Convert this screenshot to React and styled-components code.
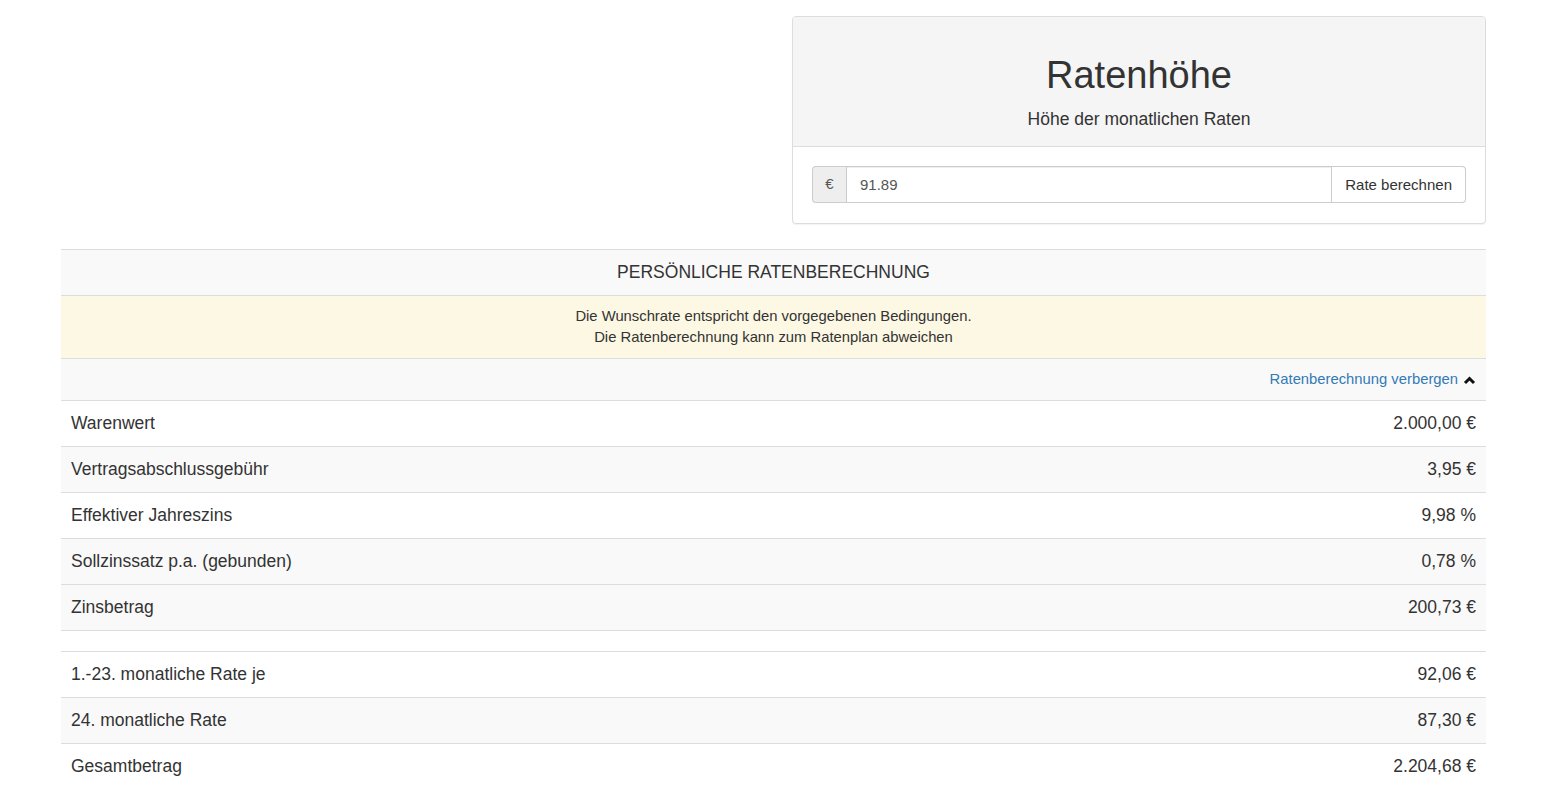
import React from "react";
import styled, { createGlobalStyle } from "styled-components";

const GlobalStyle = createGlobalStyle`
  body {
    margin: 0;
    background: #fff;
    color: #333;
    font-family: "Liberation Sans", Arial, sans-serif;
  }
`;

const Page = styled.div`
  width: 1425px;
  padding: 16px 0 20px 61px;
`;

const TopRow = styled.div`
  display: flex;
  justify-content: flex-end;
  margin-bottom: 25px;
`;

const Panel = styled.div`
  width: 692px;
  border: 1px solid #ddd;
  border-radius: 4px;
  background: #fff;
  box-shadow: 0 1px 1px rgba(0, 0, 0, 0.05);
`;

const PanelHeading = styled.div`
  background: #f5f5f5;
  border-bottom: 1px solid #ddd;
  border-radius: 3px 3px 0 0;
  padding: 37px 15px 14px;
  text-align: center;
`;

const Title = styled.h1`
  margin: 0 0 11px;
  font-size: 38px;
  font-weight: 400;
  line-height: 42px;
`;

const Subtitle = styled.div`
  font-size: 17.5px;
  line-height: 25px;
`;

const PanelBody = styled.div`
  padding: 19px 19px 20px;
`;

const InputGroup = styled.div`
  display: flex;
  height: 37px;
`;

const Addon = styled.span`
  width: 34px;
  display: flex;
  align-items: center;
  justify-content: center;
  background: #eee;
  border: 1px solid #ccc;
  border-right: 0;
  border-radius: 4px 0 0 4px;
  color: #555;
  font-size: 15px;
  padding-bottom: 2px;
  box-sizing: border-box;
`;

const Input = styled.input`
  flex: 1;
  min-width: 0;
  border: 1px solid #ccc;
  box-shadow: inset 0 1px 1px rgba(0, 0, 0, 0.075);
  padding: 0 13px;
  font-family: inherit;
  font-size: 15px;
  color: #555;
  outline: none;
`;

const Button = styled.button`
  background: #fff;
  border: 1px solid #ccc;
  border-left: 0;
  border-radius: 0 4px 4px 0;
  padding: 0 13px;
  font-family: inherit;
  font-size: 15px;
  color: #333;
  cursor: pointer;
`;

const Table = styled.div`
  border-top: 1px solid #ddd;
`;

const Cell = styled.div`
  border-bottom: 1px solid #ddd;
  background: ${(p) => (p.$shade ? "#f9f9f9" : "#fff")};
  padding: 10px;
  font-size: ${(p) => p.$size || "17.5px"};
  line-height: ${(p) => p.$lh || "25px"};
  text-align: ${(p) => p.$align || "left"};
`;

const Heading = styled(Cell)`
  text-transform: uppercase;
`;

const Notice = styled(Cell)`
  background: #fcf8e3;
`;

const ToggleLink = styled.a`
  color: #337ab7;
  text-decoration: none;
  display: inline-flex;
  align-items: center;
  gap: 5px;
  cursor: pointer;
`;

const Row = styled(Cell)`
  display: flex;
  justify-content: space-between;

  &:last-child {
    border-bottom: 0;
  }
`;

const Spacer = styled.div`
  height: 20px;
  border-bottom: 1px solid #ddd;
`;

const ChevronUp = () => (
  <svg width="13" height="10" viewBox="0 0 13 10">
    <polyline
      points="2,8 6.5,3.5 11,8"
      fill="none"
      stroke="#111"
      strokeWidth="3"
      strokeLinejoin="miter"
    />
  </svg>
);

const costs = [
  { label: "Warenwert", value: "2.000,00 €", shade: false },
  { label: "Vertragsabschlussgebühr", value: "3,95 €", shade: true },
  { label: "Effektiver Jahreszins", value: "9,98 %", shade: false },
  { label: "Sollzinssatz p.a. (gebunden)", value: "0,78 %", shade: true },
  { label: "Zinsbetrag", value: "200,73 €", shade: true },
];

const rates = [
  { label: "1.-23. monatliche Rate je", value: "92,06 €", shade: false },
  { label: "24. monatliche Rate", value: "87,30 €", shade: true },
  { label: "Gesamtbetrag", value: "2.204,68 €", shade: false },
];

export default function App() {
  return (
    <>
      <GlobalStyle />
      <Page>
        <TopRow>
          <Panel>
            <PanelHeading>
              <Title>Ratenhöhe</Title>
              <Subtitle>Höhe der monatlichen Raten</Subtitle>
            </PanelHeading>
            <PanelBody>
              <InputGroup>
                <Addon>€</Addon>
                <Input defaultValue="91.89" />
                <Button>Rate berechnen</Button>
              </InputGroup>
            </PanelBody>
          </Panel>
        </TopRow>

        <Table>
          <Heading $shade $align="center">
            Persönliche Ratenberechnung
          </Heading>
          <Notice $align="center" $size="14.8px" $lh="21px">
            Die Wunschrate entspricht den vorgegebenen Bedingungen.
            <br />
            Die Ratenberechnung kann zum Ratenplan abweichen
          </Notice>
          <Cell $shade $align="right" $size="14.8px" $lh="21px">
            <ToggleLink>
              Ratenberechnung verbergen <ChevronUp />
            </ToggleLink>
          </Cell>
          {costs.map((r) => (
            <Row key={r.label} $shade={r.shade}>
              <span>{r.label}</span>
              <span>{r.value}</span>
            </Row>
          ))}
          <Spacer />
          {rates.map((r) => (
            <Row key={r.label} $shade={r.shade}>
              <span>{r.label}</span>
              <span>{r.value}</span>
            </Row>
          ))}
        </Table>
      </Page>
    </>
  );
}
